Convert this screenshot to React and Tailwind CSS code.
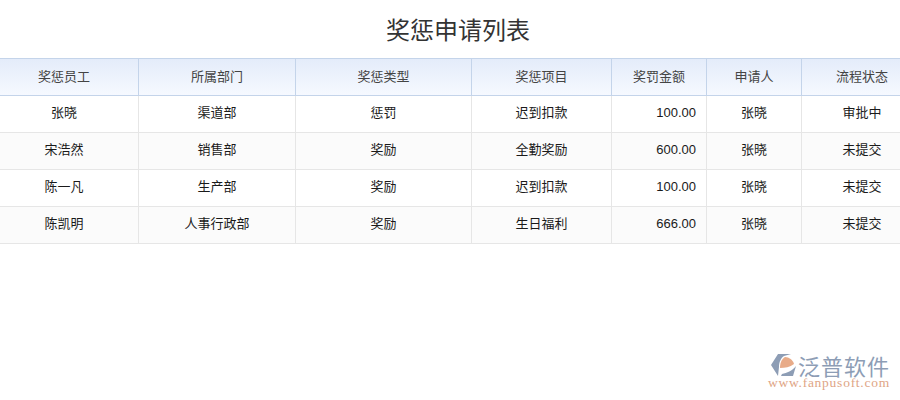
import React from 'react';

const columns = [
  { title: '奖惩员工', width: 'w-[149px]' },
  { title: '所属部门', width: 'w-[157px]' },
  { title: '奖惩类型', width: 'w-[176px]' },
  { title: '奖惩项目', width: 'w-[140px]' },
  { title: '奖罚金额', width: 'w-[95px]', cell: 'justify-end pr-[10px]' },
  { title: '申请人', width: 'w-[95px]' },
  { title: '流程状态', width: 'w-[120px]' },
];

const rows = [
  ['张晓', '渠道部', '惩罚', '迟到扣款', '100.00', '张晓', '审批中'],
  ['宋浩然', '销售部', '奖励', '全勤奖励', '600.00', '张晓', '未提交'],
  ['陈一凡', '生产部', '奖励', '迟到扣款', '100.00', '张晓', '未提交'],
  ['陈凯明', '人事行政部', '奖励', '生日福利', '666.00', '张晓', '未提交'],
];

function Logo() {
  return (
    <div className="flex flex-col items-end pr-[10px] pb-[11px]">
      <div className="flex items-center gap-[2px] h-[24px]">
        <svg width="26" height="24" viewBox="0 0 26 24">
          <path d="M8 1 H21 L14 3 C11 5 9 9 9 14 L8 23 L1 12 Z" fill="#8d9db5" />
          <path d="M10 15 C10 9 12 6 15 4 C19 4 23 7 24 11 C20 14 15 15 10 15 Z" fill="#e8ab88" />
          <path d="M12 21 C17 20 22 18 26 13 L23 23 H11 Z" fill="#8d9db5" />
        </svg>
        <span className="text-[22px] leading-[24px] tracking-[1px] text-[#8d9db5] font-['Noto_Sans_CJK_SC',sans-serif]">泛普软件</span>
      </div>
      <span className="h-[12px] text-[13.5px] leading-[12px] tracking-[0.75px] text-[#e0a585] font-['Liberation_Serif',serif]">www.fanpusoft.com</span>
    </div>
  );
}

export default function App() {
  return (
    <div className="w-[900px] h-[400px] overflow-hidden bg-white flex flex-col text-[13px] font-['Liberation_Sans','Noto_Sans_CJK_SC',sans-serif]">
      <h1 className="h-[58px] pl-[16px] pt-[3px] flex items-center justify-center text-[24px] font-normal text-[#333]">奖惩申请列表</h1>

      <div className="w-[932px] -ml-[10px]">
        <div className="flex h-[38px] border-y border-[#c4d4ea] bg-gradient-to-b from-[#e4ecfa] to-[#f6f9ff] text-[#444]">
          {columns.map((col) => (
            <div key={col.title} className={`${col.width} flex items-center justify-center border-r border-[#c4d4ea] last:border-r-0`}>
              {col.title}
            </div>
          ))}
        </div>

        {rows.map((row, i) => (
          <div key={i} className={`flex h-[37px] border-b border-[#e6e6e6] text-[#1a1a1a] ${i % 2 === 1 ? 'bg-[#fbfbfb]' : 'bg-white'}`}>
            {row.map((text, j) => (
              <div key={j} className={`${columns[j].width} flex items-center pb-[2px] ${columns[j].cell || 'justify-center'} border-r border-[#e6e6e6] last:border-r-0`}>
                {text}
              </div>
            ))}
          </div>
        ))}
      </div>

      <div className="mt-auto">
        <Logo />
      </div>
    </div>
  );
}
